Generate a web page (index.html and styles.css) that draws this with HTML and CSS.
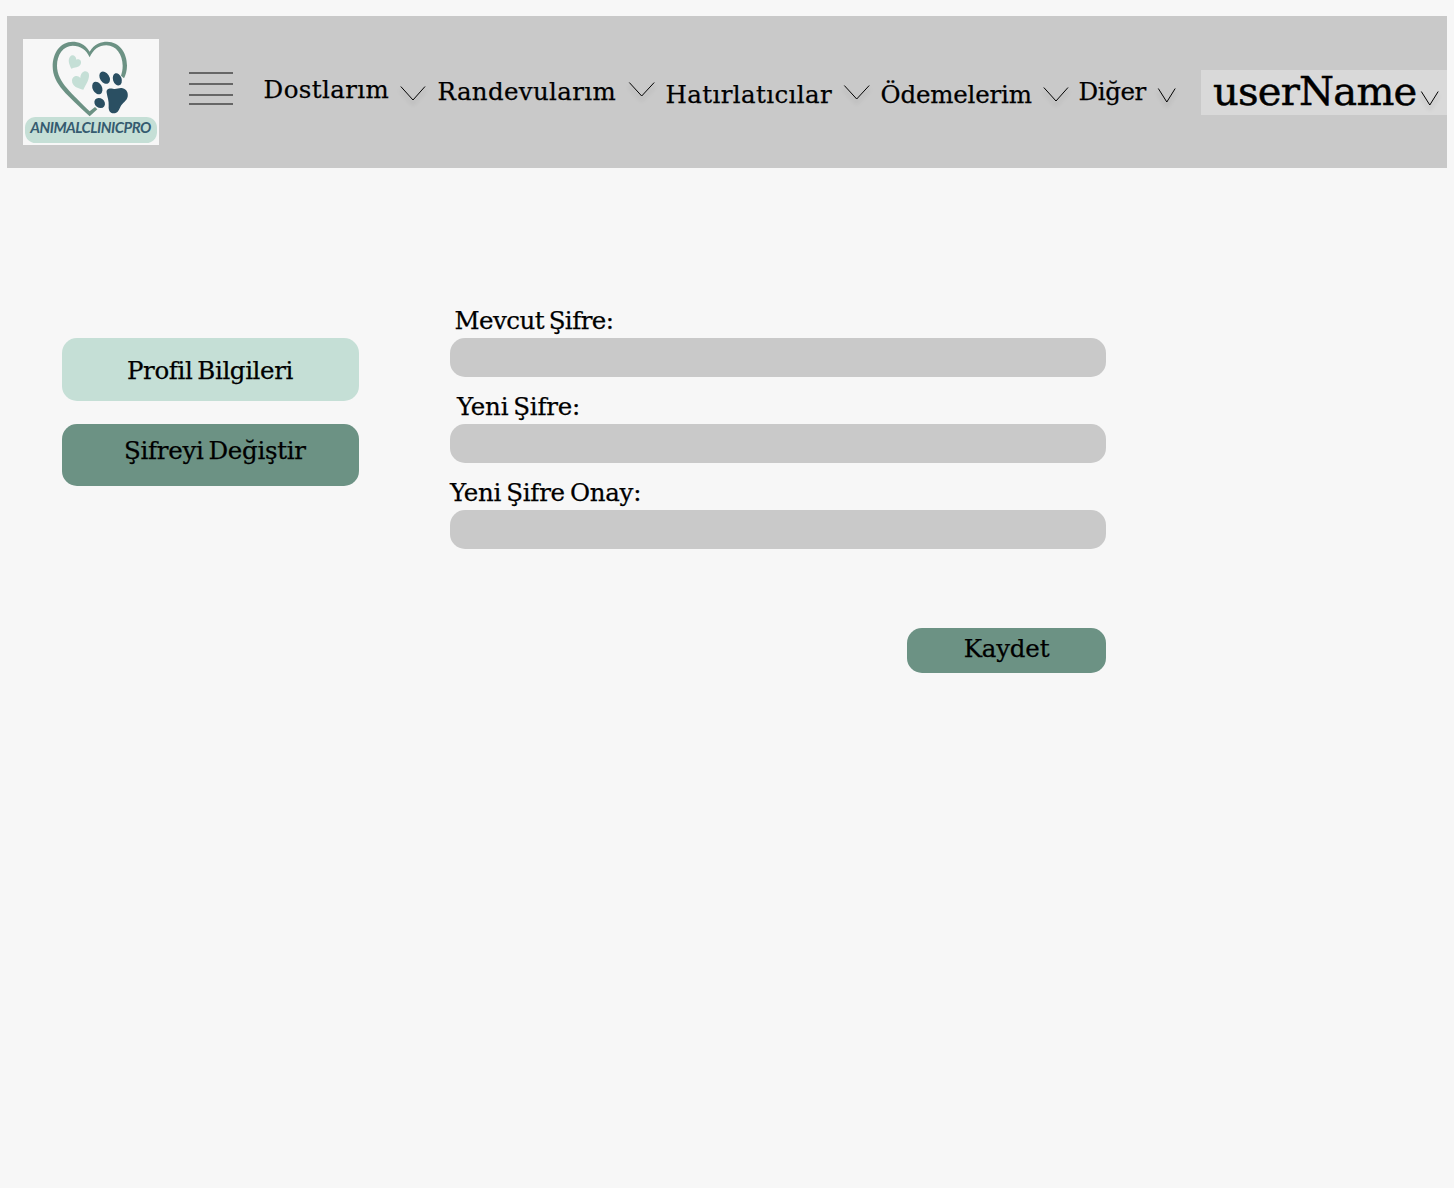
FILE: index.html
```
<!DOCTYPE html>
<html lang="tr">
<head>
<meta charset="utf-8">
<title>AnimalClinicPro</title>
<link rel="stylesheet" href="styles.css">
</head>
<body>
<header class="topbar">
  <svg class="logo" viewBox="0 0 408 318" role="img" aria-label="AnimalClinicPro">
    <rect width="408" height="318" fill="#f7f7f7"/>
    <path fill="#6c9284" d="M200 38C186 13 165 8 149 8C112 8 89 42 89 82C89 136 135 170 200 232L223 211L216 204L200 217C150 165 102 130 102 80C102 48 120 20 149 20C172 20 190 32 200 55C210 32 228 19 250 19C280 19 299 48 299 80C299 92 297 100 294 110L303 118C308 108 312 95 312 80C312 42 290 8 252 8C235 8 214 13 200 38Z"/>
    <g fill="#c5dfd6">
      <path d="M145 89C138 75 134 62 141 53C148 45 159 50 160 62C170 58 177 66 173 76C168 86 155 85 145 89Z"/>
      <path d="M181 152C165 148 147 142 147 125C147 110 165 106 172 117C172 98 190 90 197 103C202 118 190 135 181 152Z"/>
      <rect x="6" y="234" width="396" height="78" rx="32"/>
    </g>
    <g fill="#2a4f62">
      <ellipse cx="245" cy="116" rx="14" ry="20" transform="rotate(-33 245 116)"/>
      <ellipse cx="283" cy="121" rx="13" ry="19" transform="rotate(-18 283 121)"/>
      <ellipse cx="223" cy="147" rx="14" ry="20" transform="rotate(-28 223 147)"/>
      <ellipse cx="230" cy="192" rx="17" ry="14" transform="rotate(38 230 192)"/>
      <path d="M251 161C249 148 260 147 270 149C280 152 289 145 299 148C311 151 316 162 314 173C311 187 298 190 292 204C287 215 284 223 272 223C260 223 256 213 257 201C258 185 253 174 251 161Z"/>
    </g>
    <text class="logo-text" x="22" y="281">ANIMALCLINICPRO</text>
  </svg>

  <div class="burger"><i></i><i></i><i></i><i></i></div>

  <nav class="menu">
    <a class="item friends"><span>Dostlarım</span><svg class="chevron" viewBox="0 0 26 15"><path d="M.8 .5L13 14L25 .5"/></svg></a>
    <a class="item visits"><span>Randevularım</span><svg class="chevron" viewBox="0 0 26 15"><path d="M.3 .5L12.7 14L25.2 .5"/></svg></a>
    <a class="item reminders"><span>Hatırlatıcılar</span><svg class="chevron" viewBox="0 0 26 15"><path d="M.3 .5L12.7 14L25.2 .5"/></svg></a>
    <a class="item payments"><span>Ödemelerim</span><svg class="chevron" viewBox="0 0 26 15"><path d="M.8 .5L13 14L25 .5"/></svg></a>
    <a class="item other"><span>Diğer</span><svg class="chevron narrow" viewBox="0 0 18 15"><path d="M.3 .5L8.8 14L17.2 .5"/></svg></a>
  </nav>

  <a class="user"><span>userName</span><svg class="chevron narrow" viewBox="0 0 18 15"><path d="M.3 .5L8.8 14L17.2 .5"/></svg></a>
</header>

<main class="content">
  <aside class="side">
    <a class="tab profile">Profil Bilgileri</a>
    <a class="tab password">Şifreyi Değiştir</a>
  </aside>
  <form class="form">
    <label class="field current"><span>Mevcut Şifre:</span><input type="password"></label>
    <label class="field fresh"><span>Yeni Şifre:</span><input type="password"></label>
    <label class="field confirm"><span>Yeni Şifre Onay:</span><input type="password"></label>
    <button class="save" type="button">Kaydet</button>
  </form>
</main>
</body>
</html>
```
FILE: styles.css
```
* { box-sizing: border-box; }

body {
  margin: 0;
  padding: 16px 7px 0;
  min-height: 1188px;
  background: #f7f7f7;
  color: #000;
  font: 24.5px/30px "DejaVu Serif", serif;
  -webkit-text-stroke: .25px #000;
}

.topbar {
  display: flex;
  align-items: flex-start;
  height: 152px;
  padding-left: 16px;
  background: #c9c9c9;
}

.logo { flex: none; width: 136px; height: 106px; margin-top: 23px; }

.logo-text {
  font: italic 700 45px "Lato", sans-serif;
  letter-spacing: -1.6px;
  fill: #355b70;
  -webkit-text-stroke: 0;
}

.burger {
  flex: none;
  display: grid;
  grid-template-rows: 11px 11px 9px 2px;
  width: 44px;
  margin: 56px 0 0 30px;
}
.burger i { height: 2px; background: #666; }

.menu { display: flex; align-items: flex-start; margin-left: 30px; }

.item { display: flex; flex: none; align-items: flex-start; white-space: nowrap; }
.item span { flex: none; padding-left: .6px; }

.chevron {
  flex: none;
  width: 26px;
  height: 15px;
  overflow: visible;
  fill: none;
  stroke: #000;
  stroke-width: 1;
  filter: drop-shadow(0 4px 2px rgba(0, 0, 0, .2));
}
.chevron.narrow { width: 18px; }

.friends { margin-top: 59px; }
.friends span { width: 137px; letter-spacing: .4px; }
.friends .chevron { margin-top: 11px; }

.visits { margin: 61px 0 0 11px; }
.visits span { width: 192px; letter-spacing: .33px; }
.visits .chevron { margin-top: 5px; }

.reminders { margin: 64px 0 0 10px; }
.reminders span { width: 179px; letter-spacing: .38px; }
.reminders .chevron { margin-top: 5px; }

.payments { margin: 64px 0 0 10px; }
.payments span { width: 163px; letter-spacing: -.2px; }
.payments .chevron { margin-top: 7px; }

.other { margin: 61px 0 0 9px; }
.other span { width: 80px; letter-spacing: -.41px; }
.other .chevron { margin-top: 11px; }

.user {
  display: flex;
  flex: none;
  align-items: flex-start;
  width: 246px;
  height: 45px;
  margin: 54px 0 0 25px;
  padding-left: 12px;
  background: #d9d9d9;
  font-size: 40px;
  line-height: 43px;
  -webkit-text-stroke-width: .5px;
}
.user span { width: 208px; letter-spacing: -.75px; }
.user .chevron { margin-top: 21px; }

.content { display: flex; align-items: flex-start; padding-left: 55px; word-spacing: -2.5px; }

.side {
  display: grid;
  gap: 23px;
  width: 297px;
  margin-top: 170px;
}

.tab { border-radius: 15px; white-space: nowrap; }
.profile { height: 63px; padding: 18px 0 0 65px; background: #c5dfd6; letter-spacing: -.38px; }
.password { height: 62px; padding: 12px 0 0 62px; background: #6c9284; letter-spacing: -.3px; }

.form { display: flex; flex-direction: column; width: 656px; margin: 138px 0 0 91px; }

.field { display: flex; flex-direction: column; height: 86px; white-space: nowrap; }
.field span { height: 32px; }
.field input {
  width: 100%;
  height: 39px;
  padding: 0 15px;
  border: 0;
  border-radius: 15px;
  background: #c9c9c9;
  font: inherit;
}
.current span { padding-left: 4.5px; letter-spacing: -.56px; }
.fresh span { padding-left: 7px; letter-spacing: -.23px; }
.confirm span { padding-left: 0; letter-spacing: -.25px; }

.save {
  align-self: flex-end;
  width: 199px;
  height: 45px;
  margin-top: 64px;
  padding: 0 0 4px;
  border: 0;
  border-radius: 15px;
  background: #6c9284;
  color: #000;
  font: inherit;
  letter-spacing: -.19px;
}
```
